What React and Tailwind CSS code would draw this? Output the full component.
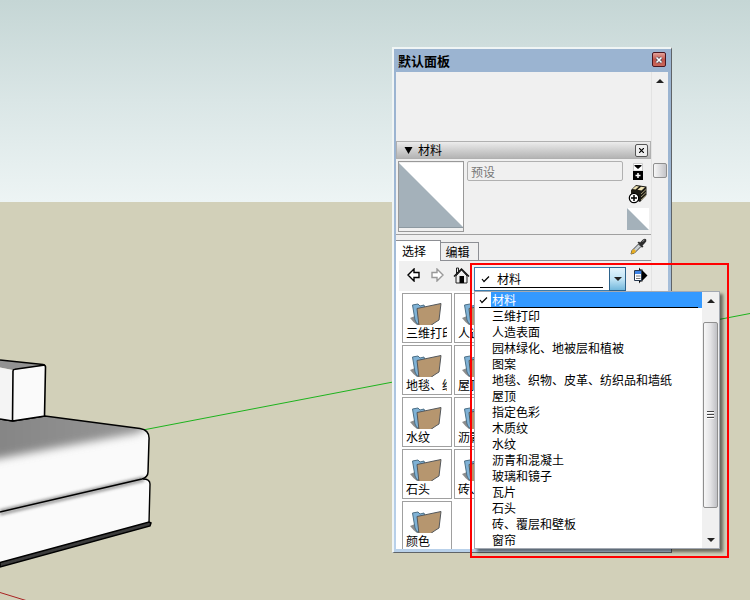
import { useState } from "react";

const categories = [
  "材料",
  "三维打印",
  "人造表面",
  "园林绿化、地被层和植被",
  "图案",
  "地毯、织物、皮革、纺织品和墙纸",
  "屋顶",
  "指定色彩",
  "木质纹",
  "水纹",
  "沥青和混凝土",
  "玻璃和镜子",
  "瓦片",
  "石头",
  "砖、覆层和壁板",
  "窗帘",
];

const folders = [
  "三维打印",
  "人造表面",
  "地毯、织物",
  "屋顶",
  "水纹",
  "沥青和混凝土",
  "石头",
  "砖、覆层",
  "颜色",
];

// 3D viewport: sky, ground, axes and the sofa
function Scene() {
  return (
    <svg className="absolute inset-0 h-full w-full" aria-hidden="true">
      <defs>
        <linearGradient id="sky" x1="0" y1="0" x2="0" y2="1">
          <stop offset="0" stopColor="#c5d6d5" />
          <stop offset="0.5" stopColor="#dae6e6" />
          <stop offset="1" stopColor="#edf4f4" />
        </linearGradient>
        <linearGradient id="seatTop" x1="0" y1="0" x2="1" y2="0">
          <stop offset="0" stopColor="#828282" />
          <stop offset="1" stopColor="#989898" />
        </linearGradient>
        <filter id="soft" x="-20%" y="-20%" width="140%" height="140%">
          <feGaussianBlur stdDeviation="4" />
        </filter>
        <filter id="thin" x="-20%" y="-20%" width="140%" height="140%">
          <feGaussianBlur stdDeviation="1.5" />
        </filter>
        <clipPath id="seat">
          <path d="M0 419L13 421L45 416L140 428.500Q150 430 149 440L148 472Q148 477 142 479L0 512Z" />
        </clipPath>
      </defs>
      <rect width="100%" height="202" fill="url(#sky)" />
      <rect y="202" width="100%" height="100%" fill="#d2d0b9" />
      <path d="M143 430L750 313.500" stroke="#1db31d" strokeWidth="1" />
      <path d="M0 592.500L26 600.500" stroke="#a82222" strokeWidth="1" />

      <path d="M0 512L144 478Q150 478 150 484L149 523L0 564Z" fill="#fafafa" />
      <path d="M0 514L144 480" stroke="#555" strokeWidth="3" filter="url(#thin)" opacity="0.6" />
      <path d="M0 562.500L149 522L151 523L150 526L0 567Z" fill="#3c3c3c" stroke="#000" strokeWidth="1.500" />
      <path d="M143 479Q150 479 150 484L149 523" fill="none" stroke="#000" strokeWidth="1.400" />

      <g clipPath="url(#seat)">
        <rect y="400" width="160" height="120" fill="#fafafa" />
        <path d="M-30 380L120 380L150 425L138 433L60 447L-30 464Z" fill="url(#seatTop)" filter="url(#soft)" />
        <path d="M0 512L144 479" stroke="#555" strokeWidth="5" filter="url(#thin)" opacity="0.6" />
      </g>
      <path
        d="M0 419L13 421L45 416L140 428.500Q150 430 149 440L148 472Q148 477 142 479L0 512"
        fill="none"
        stroke="#000"
        strokeWidth="1.500"
      />

      <path d="M0 360L45 365.500L13 370L0 367.500Z" fill="#929292" />
      <path d="M0 367.500L12.500 370V421L0 419Z" fill="#f4f4f4" />
      <path d="M12.500 370L45 365.500V416L12.500 421Z" fill="#fafafa" />
      <path
        d="M0 360L43 364.500Q45.500 365 45.500 367L44.500 416M12.500 421L13 371Q13 369.500 15 369.300L45 365M0 419L12.500 421L45 416"
        fill="none"
        stroke="#000"
        strokeWidth="1.600"
      />
    </svg>
  );
}

function FolderIcon() {
  return (
    <svg width="48" height="31" viewBox="1 1 48 31" className="block shrink-0" aria-hidden="true">
      <path d="M8 25L13 23L18 32H15Q11 29 8 25Z" fill="#8c8c8c" />
      <path d="M10.500 12L16 11L18 13L22 12L26 28L15 31L13 27Z" fill="#7fb2d6" stroke="#4c6f86" strokeWidth="1" />
      <path d="M15 15.500L39 10.500L37 27L33 29.500L28 33H17Z" fill="#b6966f" stroke="#54585c" strokeWidth="1" />
    </svg>
  );
}

function Check() {
  return (
    <svg width="9" height="8" viewBox="0 0 9 8" aria-hidden="true">
      <path d="M1 4L3 6.500L8 1.500" fill="none" stroke="#000" strokeWidth="1.200" />
    </svg>
  );
}

function Triangle({ up }) {
  return (
    <svg width="8" height="4" viewBox="0 0 8 4" aria-hidden="true">
      <path d={up ? "M0 4L4 0L8 4Z" : "M0 0H8L4 4Z"} fill="#222" />
    </svg>
  );
}

function ArrowIcon({ flip, color }) {
  return (
    <svg width="13" height="14" viewBox="0 0 13 14" className={flip ? "-scale-x-100" : ""} aria-hidden="true">
      <path d="M1 7L7 1V4.500H12V9.500H7V13Z" fill="#fff" stroke={color} strokeWidth="1.400" />
    </svg>
  );
}

function HomeIcon() {
  return (
    <svg width="17" height="17" viewBox="0 0 17 17" aria-hidden="true">
      <path d="M3 9V16H14V9L8.500 3Z" fill="#eee" stroke="#222" strokeWidth="1" />
      <path d="M3.500 1H5.500V4.500L3.500 6.500Z" fill="#eee" stroke="#222" strokeWidth="1" />
      <path d="M1 9.500L8.500 2L16 9.500" fill="none" stroke="#111" strokeWidth="1.500" />
      <path d="M6.500 9H11V16H6.500Z" fill="#000" />
    </svg>
  );
}

function SecondaryIcon() {
  return (
    <svg width="12" height="17" viewBox="0 0 12 17" aria-hidden="true">
      <path d="M1.500 0.500H10.500V8H1.500Z" fill="#fff" stroke="#ccc" />
      <path d="M2.500 2H9.500V3L6 6L2.500 3Z" fill="#000" />
      <path d="M1 8H11V17H1Z" fill="#000" />
      <path d="M6 10V15M3.500 12.500H8.500" stroke="#fff" strokeWidth="1.500" />
    </svg>
  );
}

function CreateIcon() {
  return (
    <svg width="20" height="20" viewBox="0 0 20 20" aria-hidden="true">
      <path d="M3 6L8 1L18.500 2.500L18.500 11L12 18L3 14Z" fill="#1c1a14" />
      <path d="M4.500 5L8 2L11 2.500L7.500 5.500Z" fill="#efe3b4" />
      <path d="M9.500 5.800L13 2.700L17 3.300L13.500 6.500Z" fill="#efe3b4" />
      <path d="M13 10L18 5.500M13 13L18 8.500M13 16L18 11.500" stroke="#a39871" strokeWidth="1" />
      <circle cx="6" cy="14" r="4.700" fill="#fff" stroke="#000" strokeWidth="1.200" />
      <path d="M6 11V17M3 14H9" stroke="#000" strokeWidth="1.500" />
    </svg>
  );
}

function DropperIcon() {
  return (
    <svg width="17" height="17" viewBox="0 0 17 17" aria-hidden="true">
      <path d="M1 16L2 12.500L8.500 6L11 8.500L4.500 15Z" fill="#c9d0d4" stroke="#444" strokeWidth="1" />
      <path d="M1 16L2 12.500L4 11L6 13L4.500 15Z" fill="#e8ae22" />
      <path d="M7.500 4.500L9 3.500L10 4.500L13 1.500Q15 0 16.200 1.500Q17 3 15 5L12.500 7.500L13.500 8.500L12 9.800Z" fill="#2c2c2c" />
      <path d="M12.500 3.500L14.500 2" stroke="#999" />
    </svg>
  );
}

function DetailsIcon() {
  return (
    <svg width="15" height="17" viewBox="0 0 15 17" aria-hidden="true">
      <path d="M6 0.500L7.500 2.500H9.500V3.500L14.500 8.500L9.500 13.500V14.500H7.500L6 16.500Z" fill="#000" />
      <path d="M1.500 3.500H8.500V13.500H1.500Z" fill="#fff" stroke="#26384f" />
      <path d="M2 4H8V7H2Z" fill="#3d83e6" />
      <path d="M3 9H7.500M3 11.500H7.500" stroke="#777" />
    </svg>
  );
}

function Swatch({ className }) {
  return (
    <svg viewBox="0 0 10 10" preserveAspectRatio="none" className={className} aria-hidden="true">
      <path d="M0 0H10V10H0Z" fill="#fff" />
      <path d="M0 0L10 10H0Z" fill="#a4b1ba" />
    </svg>
  );
}

function CategorySelect({ value, onChange }) {
  return (
    <div className="relative z-10 w-[152px]">
      <select
        aria-label="材料库"
        value={value}
        onChange={(e) => onChange(e.target.value)}
        className="block h-6 w-full appearance-none border border-[#3c7fb1] bg-white pr-5 pl-[22px] text-xs outline-none"
      >
        {categories.map((c) => (
          <option key={c}>{c}</option>
        ))}
      </select>
      <span className="pointer-events-none absolute top-2 left-[7px]">
        <Check />
      </span>
      <span className="pointer-events-none absolute right-[23px] bottom-[3px] left-1.5 border-b border-black" />
      <span className="pointer-events-none absolute top-0 right-0 flex h-6 w-[17px] items-center justify-center border border-[#2c628b] bg-linear-to-b from-[#e3f4fc] via-[#c0e4f5] to-[#72b8dc]">
        <Triangle />
      </span>

      <div className="absolute top-full left-0 flex w-[246px] border border-[#a3a9b2] bg-white shadow-[3px_3px_3px_rgba(0,0,0,0.5)]">
        <ul className="min-w-0 flex-1 text-xs leading-4">
          {categories.map((c) => (
            <li key={c}>
              <button
                type="button"
                onClick={() => onChange(c)}
                className={`relative flex h-4 w-full items-center text-left whitespace-nowrap ${c === value ? "text-white" : "text-black"}`}
              >
                <span className="flex w-4 shrink-0 justify-end pr-[3px]">{c === value && <Check />}</span>
                <span className={`h-4 flex-1 pl-px ${c === value ? "bg-[#3399ff]" : ""}`}>{c}</span>
                {c === value && <span className="absolute right-1 bottom-0 left-1 border-b border-black" />}
              </button>
            </li>
          ))}
        </ul>
        <div className="flex w-[17px] flex-col items-center bg-[#f0f0f0]">
          <span className="flex h-[30px] items-center pb-3">
            <Triangle up />
          </span>
          <span className="flex w-[15px] flex-1 flex-col items-center justify-center gap-px rounded-xs border border-[#8f8f8f] bg-linear-to-r from-[#f7f7f7] via-[#e3e3e5] to-[#bfc0c4]">
            <i className="h-0.5 w-[7px] border-t border-[#444] bg-white" />
            <i className="h-0.5 w-[7px] border-t border-[#444] bg-white" />
            <i className="h-0.5 w-[7px] border-t border-[#444] bg-white" />
          </span>
          <span className="flex h-10 items-center pt-6">
            <Triangle />
          </span>
        </div>
      </div>
    </div>
  );
}

function MaterialsTray() {
  const [category, setCategory] = useState("材料");

  return (
    <div className="min-w-0 flex-1 pt-[69px]">
      <div className="flex h-[18px] items-center border border-[#b0b0b0] bg-linear-to-b from-[#ececec] to-[#b4b4b4] pr-0.5 pl-[7px]">
        <svg width="9" height="7" viewBox="0 0 9 7" aria-hidden="true">
          <path d="M0.500 0H8.500L4.500 7Z" fill="#000" />
        </svg>
        <h2 className="flex-1 pl-[5px] text-xs leading-4">材料</h2>
        <button
          type="button"
          aria-label="关闭材料"
          className="flex h-[13px] w-[13px] items-center justify-center rounded-xs border border-[#555] bg-[#eee]"
        >
          <svg width="5" height="5" viewBox="0 0 5 5" aria-hidden="true">
            <path d="M0 0L5 5M5 0L0 5" stroke="#000" strokeWidth="1.200" />
          </svg>
        </button>
      </div>

      <div className="flex h-[76px] border-b border-[#a0a0a0] pt-0.5 pl-0.5">
        <div className="h-[71px] w-[66px] border border-[#999] pt-px">
          <Swatch className="h-[65px] w-full border-b border-[#8d99a1]" />
        </div>
        <input
          type="text"
          aria-label="材料名称"
          defaultValue="预设"
          disabled
          className="mr-0.5 ml-[3px] h-5 min-w-0 flex-1 rounded-xs border border-[#b0b0b0] bg-[#f0f0f0] px-[3px] text-xs text-[#777]"
        />
        <div className="flex w-[26px] flex-col items-center gap-1 pt-0.5">
          <button type="button" aria-label="显示辅助选择窗格">
            <SecondaryIcon />
          </button>
          <button type="button" aria-label="创建材料">
            <CreateIcon />
          </button>
          <Swatch className="h-[22px] w-[22px] shrink-0" />
        </div>
      </div>

      <div className="flex h-[26px] items-end">
        <button
          type="button"
          className="h-[21px] w-[45px] border-t border-r border-[#8d8f94] bg-white pr-2 text-xs leading-4"
        >
          选择
        </button>
        <div className="flex h-full flex-1 items-end justify-between border-b border-[#8d8f94] pr-1">
          <button type="button" className="h-[18px] w-[38px] border-t border-r border-[#8d8f94] pr-1 text-xs leading-4">
            编辑
          </button>
          <button type="button" aria-label="样本颜料" className="self-start pt-[3px]">
            <DropperIcon />
          </button>
        </div>
      </div>

      <div className="flex h-[30px] border-l-3 border-white pt-1.5 pl-2">
        <button type="button" aria-label="后退" className="mr-[11px] h-4 w-[13px]">
          <ArrowIcon color="#000" />
        </button>
        <button type="button" aria-label="前进" className="mr-[9px] h-4 w-[13px]">
          <ArrowIcon flip color="#999" />
        </button>
        <button type="button" aria-label="在模型中" className="mr-1 h-[17px] w-[17px]">
          <HomeIcon />
        </button>
        <CategorySelect value={category} onChange={setCategory} />
        <button type="button" aria-label="详细信息" className="ml-[7px] h-[17px]">
          <DetailsIcon />
        </button>
      </div>

      <ul className="grid h-[258px] grid-cols-[50px_50px] content-start gap-0.5 overflow-hidden bg-white pt-0.5 pl-1.5">
        {folders.map((name) => (
          <li key={name} className="h-[50px] overflow-hidden border border-[#a0a0a0]">
            <FolderIcon />
            <div className="mr-1 ml-[3px] overflow-hidden text-xs leading-4 whitespace-nowrap">{name}</div>
          </li>
        ))}
      </ul>
    </div>
  );
}

export default function App() {
  return (
    <div className="relative h-screen w-full overflow-hidden font-['Noto_Sans_CJK_SC',sans-serif] text-black">
      <Scene />

      <section className="absolute top-[47px] left-[392px] w-[280px] border-t-2 border-r border-b border-l-2 border-t-[#f0f5f5] border-r-[#5f6468] border-b-[#5f6468] border-l-[#f0f5f5] bg-linear-to-b from-[#9bb4d1] from-20% to-[#b9d1ea] pr-[3px] pb-[3px] pl-0.5">
        <header className="flex h-[23px] items-center justify-between bg-[#9bb4d1] pr-0.5 pl-0.5">
          <h1 className="text-[13px] leading-5 font-bold">默认面板</h1>
          <button
            type="button"
            aria-label="关闭"
            className="mb-0.5 flex h-[15px] w-[14px] items-center justify-center rounded-xs border border-[#4a1620] bg-linear-to-b from-[#e3a29b] via-[#c0544a] to-[#c8665a]"
          >
            <svg width="8" height="8" viewBox="0 0 8 8" aria-hidden="true">
              <path d="M1.500 1.500L6.500 6.500M6.500 1.500L1.500 6.500" stroke="#4a4a5c" strokeWidth="3" />
              <path d="M1.500 1.500L6.500 6.500M6.500 1.500L1.500 6.500" stroke="#fff" strokeWidth="1.600" />
            </svg>
          </button>
        </header>
        <div className="flex bg-[#f0f0f0]">
          <MaterialsTray />
          <div className="flex w-[17px] flex-col items-center border-l border-[#e3e3e3] bg-[#f0f0f0] pt-[7px]">
            <Triangle up />
            <span className="mt-20 h-[15px] w-[14px] rounded-xs border border-[#8f8f8f] bg-linear-to-r from-[#f7f7f7] to-[#c4c4c8]" />
          </div>
        </div>
      </section>

      {/* Highlight frame around the category list */}
      <div className="pointer-events-none absolute top-[263px] left-[470px] h-[295px] w-[259px] border-2 border-[#ff0000]" />
    </div>
  );
}
